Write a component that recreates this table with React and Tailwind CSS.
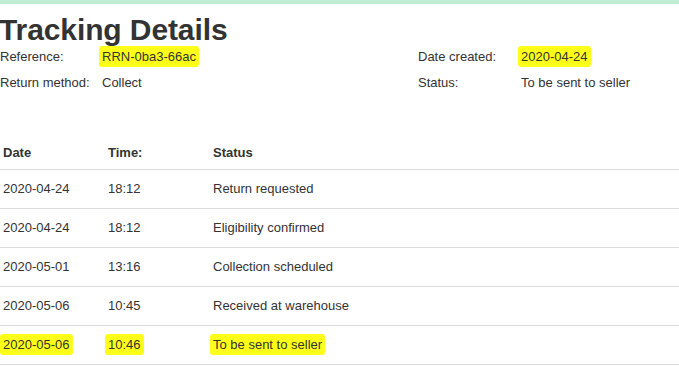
const rows = [
  { date: "2020-04-24", time: "18:12", status: "Return requested" },
  { date: "2020-04-24", time: "18:12", status: "Eligibility confirmed" },
  { date: "2020-05-01", time: "13:16", status: "Collection scheduled" },
  { date: "2020-05-06", time: "10:45", status: "Received at warehouse" },
  { date: "2020-05-06", time: "10:46", status: "To be sent to seller", marked: true },
];

const Mark = ({ children, on = true }) =>
  on ? (
    <span className="bg-[#ffff1a] px-[3px] py-[3px] -mx-[3px] rounded-[3px]">
      {children}
    </span>
  ) : (
    children
  );

export default function App() {
  return (
    <div className="w-[679px] h-[367px] bg-white overflow-hidden font-['Liberation_Sans',Arial,sans-serif] text-[#333] text-[13px]">
      <div className="h-[4px] bg-[#c2ebd3]" />

      <h1 className="text-[30px] font-bold leading-none mt-[11px] ml-[-1px] text-[#333] tracking-[-0.1px]">
        Tracking Details
      </h1>

      <div className="grid grid-cols-[102px_316px_103px_1fr] mt-[4px] leading-[15px]">
        <div>Reference:</div>
        <div>
          <Mark>RRN-0ba3-66ac</Mark>
        </div>
        <div>Date created:</div>
        <div>
          <Mark>2020-04-24</Mark>
        </div>
        <div className="mt-[11px]">Return method:</div>
        <div className="mt-[11px]">Collect</div>
        <div className="mt-[11px]">Status:</div>
        <div className="mt-[11px]">To be sent to seller</div>
      </div>

      <table className="w-full mt-[45px] border-collapse">
        <thead>
          <tr className="border-b border-[#dcdcdc]">
            <th className="text-left font-bold w-[108px] pl-[3px] pt-[2px] h-[34px]">Date</th>
            <th className="text-left font-bold w-[105px] pt-[2px] h-[34px]">Time:</th>
            <th className="text-left font-bold pt-[2px] h-[34px]">Status</th>
          </tr>
        </thead>
        <tbody>
          {rows.map((r, i) => (
            <tr key={i} className="border-b border-[#dcdcdc]">
              <td className="pl-[3px] h-[39px]">
                <Mark on={!!r.marked}>{r.date}</Mark>
              </td>
              <td className="h-[39px]">
                <Mark on={!!r.marked}>{r.time}</Mark>
              </td>
              <td className="h-[39px]">
                <Mark on={!!r.marked}>{r.status}</Mark>
              </td>
            </tr>
          ))}
        </tbody>
      </table>
    </div>
  );
}
